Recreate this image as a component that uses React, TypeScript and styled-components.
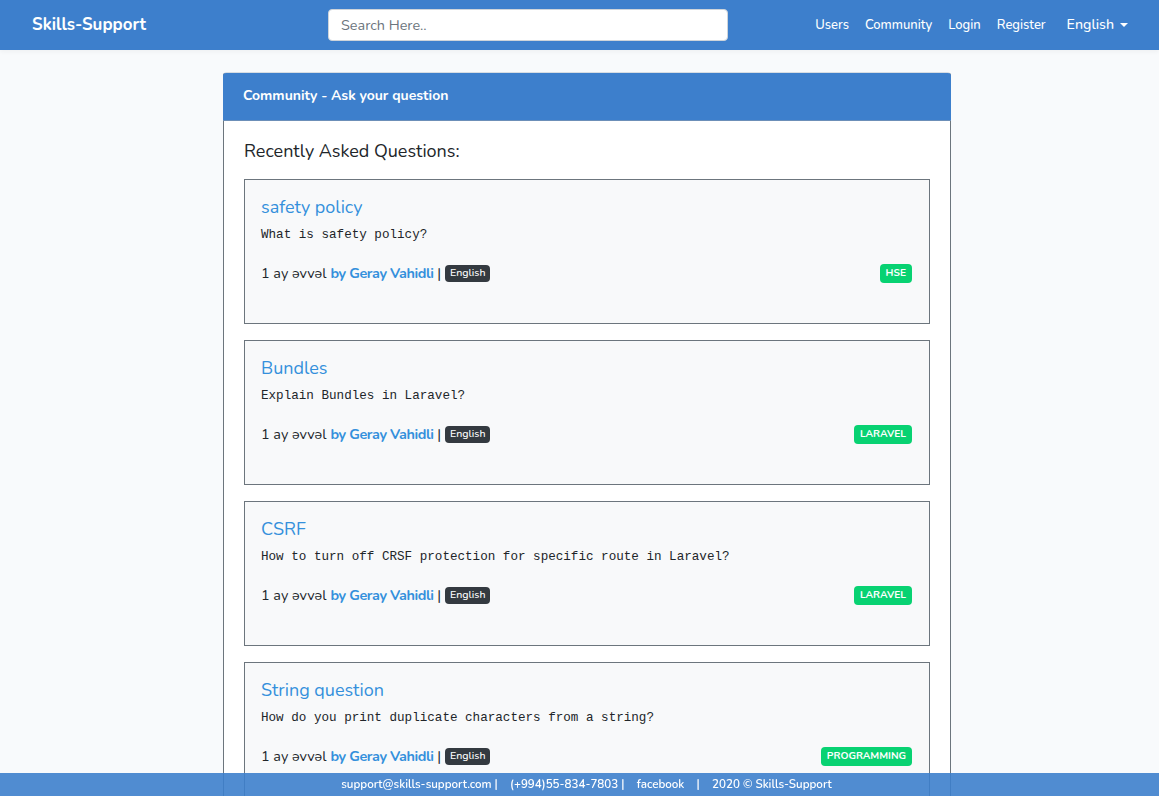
import React from "react";
import styled, { createGlobalStyle } from "styled-components";

const GlobalStyle = createGlobalStyle`
  html, body { margin: 0; padding: 0; }
  body {
    background: #f8fafc;
    font-family: "Nunito", "Lato", "Noto Sans", sans-serif;
    font-size: 14.4px;
    color: #212529;
    line-height: 1.6;
  }
  * { box-sizing: border-box; }
`;

const Navbar = styled.nav`
  height: 50px;
  background: #3d7fcc;
  display: flex;
  align-items: center;
  padding: 0 31px 0 32px;
  box-shadow: 0 2px 4px rgba(0, 0, 0, 0.04);
`;

const Brand = styled.a`
  color: #fff;
  font-size: 16.9px;
  font-weight: 700;
  text-decoration: none;
  width: 296px;
`;

const Search = styled.input`
  width: 400px;
  height: 32px;
  border: 1px solid #ced4da;
  border-radius: 4px;
  padding: 0 12px;
  font-family: inherit;
  font-size: 14.4px;
  color: #495057;
  background: #fff;
  &::placeholder { color: #6c757d; }
`;

const NavLinks = styled.ul`
  list-style: none;
  margin: 0 0 0 auto;
  padding: 0;
  display: flex;
  align-items: center;
  gap: 16px;
`;

const NavLink = styled.li<{ $big?: boolean }>`
  color: #fff;
  font-size: ${(p) => (p.$big ? "14.2px" : "13px")};
  font-weight: 500;
  margin-left: ${(p) => (p.$big ? "5px" : "0")};
  display: flex;
  align-items: center;
  gap: 6px;
`;

const Caret = styled.span`
  width: 0;
  height: 0;
  border-left: 4px solid transparent;
  border-right: 4px solid transparent;
  border-top: 4.5px solid #fff;
`;

const Main = styled.main`
  padding: 22px 0 60px 223px;
`;

const Card = styled.section`
  width: 728px;
  background: #fff;
  border: 1px solid #6c757d;
  border-top-color: #d7dde3;
  border-radius: 4px 4px 0 0;
`;

const CardHeader = styled.header`
  height: 48px;
  background: #3d7fcc;
  color: #fff;
  font-weight: 700;
  font-size: 14px;
  display: flex;
  align-items: center;
  padding: 0 20px;
  margin: 0 -1px;
  border-bottom: 1px solid #6c8fb8;
  border-radius: 3px 3px 0 0;
`;

const CardBody = styled.div`
  padding: 20px 20px 0 20px;
`;

const Heading = styled.h5`
  margin: 0 0 16px;
  font-size: 18px;
  font-weight: 400;
  line-height: 1.2;
  color: #212529;
`;

const QuestionCard = styled.article`
  background: #f8f9fa;
  border: 1px solid #6c757d;
  padding: 16px;
  margin-bottom: 16px;
`;

const QTitle = styled.a`
  display: block;
  font-size: 18px;
  line-height: 22px;
  color: #3490dc;
  text-decoration: none;
  margin-bottom: 7px;
`;

const QBody = styled.p`
  margin: 0 0 18px;
  font-family: "Liberation Mono", "DejaVu Sans Mono", monospace;
  font-size: 12.6px;
  line-height: 20px;
  color: #212529;
`;

const Meta = styled.div`
  height: 22px;
  margin-bottom: 22px;
  display: flex;
  align-items: center;
  font-size: 14.4px;
`;

const Author = styled.a`
  color: #3490dc;
  font-weight: 700;
  letter-spacing: -0.4px;
  text-decoration: none;
  margin-left: 4px;
`;

const Badge = styled.span<{ $variant: "dark" | "green" }>`
  display: inline-block;
  font-size: 10.6px;
  font-weight: ${(p) => (p.$variant === "dark" ? 500 : 700)};
  line-height: 1;
  padding: 3px 5px 4px;
  border-radius: 4px;
  color: #fff;
  background: ${(p) => (p.$variant === "dark" ? "#343a40" : "#08d272")};
  margin-left: ${(p) => (p.$variant === "dark" ? "4px" : "auto")};
  text-transform: ${(p) => (p.$variant === "green" ? "uppercase" : "none")};
  ${(p) => (p.$variant === "green" ? "font-size: 10.2px; padding: 4px 6px 4px; margin-right: 1px;" : "")}
`;

const Footer = styled.footer`
  position: fixed;
  left: 0;
  right: 0;
  bottom: 0;
  height: 23px;
  background: rgba(61, 127, 204, 0.9);
  color: #fff;
  font-size: 11.6px;
  font-weight: 600;
  display: flex;
  align-items: center;
  justify-content: center;
  padding-left: 14px;
  white-space: pre;
`;

const questions = [
  { title: "safety policy", body: "What is safety policy?", tag: "HSE" },
  { title: "Bundles", body: "Explain Bundles in Laravel?", tag: "Laravel" },
  { title: "CSRF", body: "How to turn off CRSF protection for specific route in Laravel?", tag: "Laravel" },
  { title: "String question", body: "How do you print duplicate characters from a string?", tag: "Programming" },
  { title: "OOP", body: "What is polymorphism?", tag: "Programming" },
];

export default function App() {
  return (
    <>
      <GlobalStyle />
      <Navbar>
        <Brand href="#">Skills-Support</Brand>
        <Search placeholder="Search Here.." />
        <NavLinks>
          <NavLink>Users</NavLink>
          <NavLink>Community</NavLink>
          <NavLink>Login</NavLink>
          <NavLink>Register</NavLink>
          <NavLink $big>
            English <Caret />
          </NavLink>
        </NavLinks>
      </Navbar>
      <Main>
        <Card>
          <CardHeader>Community - Ask your question</CardHeader>
          <CardBody>
            <Heading>Recently Asked Questions:</Heading>
            {questions.map((q) => (
              <QuestionCard key={q.title}>
                <QTitle href="#">{q.title}</QTitle>
                <QBody>{q.body}</QBody>
                <Meta>
                  1 ay əvvəl<Author href="#">by Geray Vahidli</Author>&nbsp;|
                  <Badge $variant="dark">English</Badge>
                  <Badge $variant="green">{q.tag}</Badge>
                </Meta>
              </QuestionCard>
            ))}
          </CardBody>
        </Card>
      </Main>
      <Footer>
        {"support@skills-support.com |    (+994)55-834-7803 |    facebook    |    2020 © Skills-Support"}
      </Footer>
    </>
  );
}
